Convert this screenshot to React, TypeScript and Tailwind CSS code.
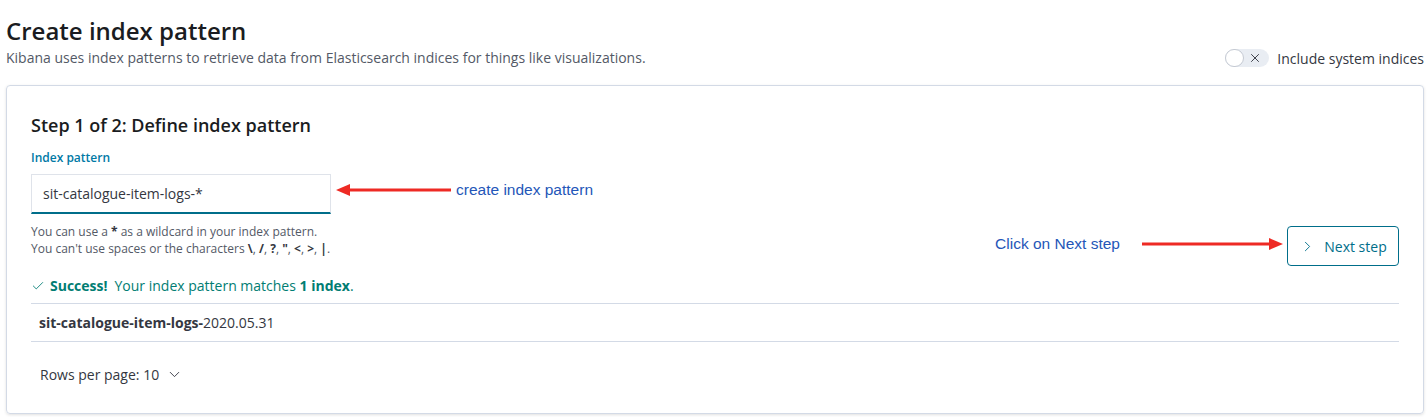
import { ChevronDown, ChevronRight, Check, X } from "lucide-react";

function Arrow({ width, dir }: { width: number; dir: "left" | "right" }) {
  // red annotation arrow
  return (
    <svg width={width} height="14" viewBox={`0 0 ${width} 14`}>
      {dir === "left" ? (
        <>
          <line x1="12" y1="7" x2={width} y2="7" stroke="#ee2a24" strokeWidth="3" />
          <polygon points="0,7 14,1 14,13" fill="#ee2a24" />
        </>
      ) : (
        <>
          <line x1="0" y1="7" x2={width - 12} y2="7" stroke="#ee2a24" strokeWidth="3" />
          <polygon points={`${width},7 ${width - 14},1 ${width - 14},13`} fill="#ee2a24" />
        </>
      )}
    </svg>
  );
}

export default function App() {
  return (
    <div className="w-[1427px] h-[417px] bg-white text-[#343741] font-['Open_Sans',sans-serif] overflow-hidden">
      <div className="px-[6px] pt-[15px]">
        <h1 className="text-[24px] leading-[32px] font-semibold text-[#1a1c21]">Create index pattern</h1>
        <div className="flex items-center justify-between">
          <p className="text-[14px] leading-[22px] text-[#535966]">
            Kibana uses index patterns to retrieve data from Elasticsearch indices for things like visualizations.
          </p>
          <div className="flex items-center gap-[8px] mr-[-3px]">
            <div className="relative w-[44px] h-[18px] rounded-full bg-[#e9edf3]">
              <div className="absolute left-0 top-0 w-[19px] h-[18px] rounded-full bg-white border border-[#c5cad3]" />
              <X className="absolute right-[7px] top-[2px] text-[#343741]" size={14} strokeWidth={1.6} />
            </div>
            <span className="text-[14px] text-[#343741]">Include system indices</span>
          </div>
        </div>
      </div>

      <div className="ml-[6px] mr-[3px] mt-[16px] h-[329px] border border-[#d3dae6] rounded-[4px] shadow-[0_1px_3px_rgba(0,0,0,0.12)] px-[24px] pt-[26px]">
        <h2 className="text-[18px] leading-[26px] font-semibold text-[#1a1c21]">Step 1 of 2: Define index pattern</h2>

        <div className="flex mt-[12px]">
          <div className="w-[300px]">
            <label className="block text-[12px] leading-[16px] font-semibold text-[#0079a5]">Index pattern</label>
            <div className="mt-[8px] h-[40px] bg-white border border-[#dfe3ea] border-b-2 border-b-[#006e8a] flex items-center px-[11px] text-[14px] text-[#343741]">
              sit-catalogue-item-logs-*
            </div>
            <div className="mt-[9px] text-[12px] leading-[17px] text-[#535966]">
              <div>
                You can use a <b className="text-[#343741]">*</b> as a wildcard in your index pattern.
              </div>
              <div>
                You can't use spaces or the characters <b className="text-[#343741]">\</b>, <b className="text-[#343741]">/</b>,{" "}
                <b className="text-[#343741]">?</b>, <b className="text-[#343741]">"</b>, <b className="text-[#343741]">&lt;</b>,{" "}
                <b className="text-[#343741]">&gt;</b>, <b className="text-[#343741]">|</b>.
              </div>
            </div>
          </div>

          <div className="flex flex-col flex-1">
            <div className="flex items-center mt-[28px] ml-[5px] gap-[5px]">
              <Arrow width={115} dir="left" />
              <span className="font-['Liberation_Sans',Arial,sans-serif] text-[15.5px] text-[#2456b8]">create index pattern</span>
            </div>
            <div className="flex items-center justify-end mt-[25px]">
              <div className="flex items-center mb-[5px]">
                <span className="font-['Liberation_Sans',Arial,sans-serif] text-[15.5px] text-[#2456b8] mr-[22px]">Click on Next step</span>
                <Arrow width={141} dir="right" />
              </div>
              <button className="ml-[4px] h-[40px] w-[112px] border border-[#006e8a] rounded-[4px] flex items-center justify-center gap-[8px] text-[14px] text-[#006e8a]">
                <ChevronRight size={17} strokeWidth={1.3} />
                Next step
              </button>
            </div>
          </div>
        </div>

        <div className="flex items-center mt-[8px] text-[14px] text-[#017d73] h-[22px]">
          <Check size={14} strokeWidth={1.5} className="mr-[5px] mt-[1px]" />
          <b className="mr-[7px]">Success!</b>
          Your index pattern matches&nbsp;<b>1 index</b>.
        </div>

        <div className="mt-[7px] border-t border-[#d3dae6]">
          <div className="h-[37px] flex items-center px-[8px] text-[14px] text-[#343741]">
            <b>sit-catalogue-item-logs-</b>2020.05.31
          </div>
        </div>
        <div className="border-t border-[#d3dae6]">
          <div className="h-[64px] flex items-center px-[9px] text-[14px] text-[#343741]">
            Rows per page: 10
            <ChevronDown size={17} strokeWidth={1.3} className="ml-[7px]" />
          </div>
        </div>
      </div>
    </div>
  );
}
